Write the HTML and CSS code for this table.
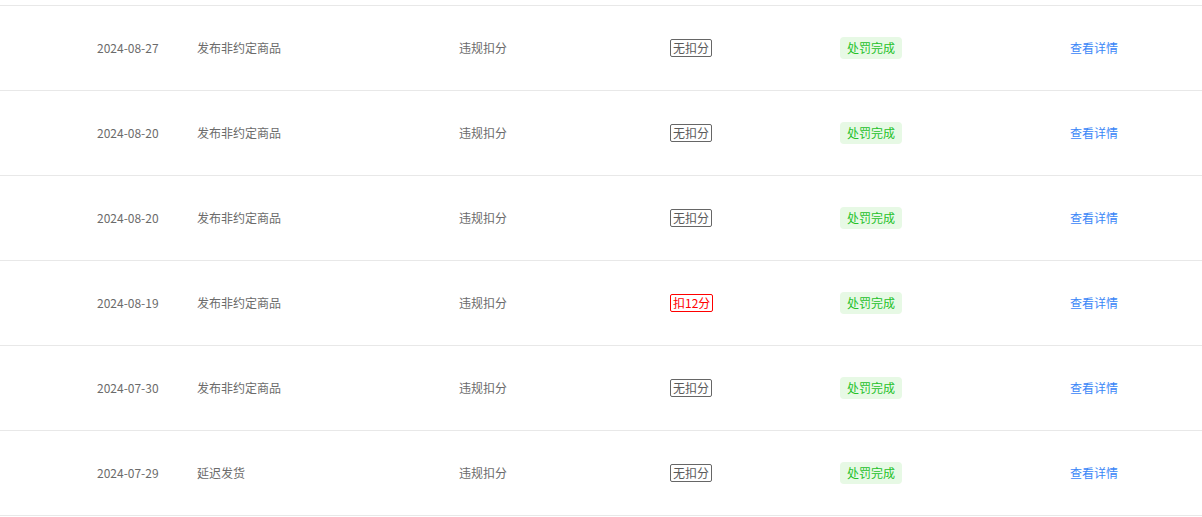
FILE: index.html
```html
<!DOCTYPE html>
<html lang="zh-CN">
<head>
<meta charset="utf-8">
<link rel="stylesheet" href="styles.css">
</head>
<body>
<div class="table">
  <div class="row">
    <span class="date">2024-08-27</span><span class="name">发布非约定商品</span><span class="type">违规扣分</span>
    <span class="cell"><span class="tag">无扣分</span></span><span class="cell"><span class="badge">处罚完成</span></span><a class="link">查看详情</a>
  </div>
  <div class="row">
    <span class="date">2024-08-20</span><span class="name">发布非约定商品</span><span class="type">违规扣分</span>
    <span class="cell"><span class="tag">无扣分</span></span><span class="cell"><span class="badge">处罚完成</span></span><a class="link">查看详情</a>
  </div>
  <div class="row">
    <span class="date">2024-08-20</span><span class="name">发布非约定商品</span><span class="type">违规扣分</span>
    <span class="cell"><span class="tag">无扣分</span></span><span class="cell"><span class="badge">处罚完成</span></span><a class="link">查看详情</a>
  </div>
  <div class="row">
    <span class="date">2024-08-19</span><span class="name">发布非约定商品</span><span class="type">违规扣分</span>
    <span class="cell"><span class="tag tag-red">扣12分</span></span><span class="cell"><span class="badge">处罚完成</span></span><a class="link">查看详情</a>
  </div>
  <div class="row">
    <span class="date">2024-07-30</span><span class="name">发布非约定商品</span><span class="type">违规扣分</span>
    <span class="cell"><span class="tag">无扣分</span></span><span class="cell"><span class="badge">处罚完成</span></span><a class="link">查看详情</a>
  </div>
  <div class="row">
    <span class="date">2024-07-29</span><span class="name">延迟发货</span><span class="type">违规扣分</span>
    <span class="cell"><span class="tag">无扣分</span></span><span class="cell"><span class="badge">处罚完成</span></span><a class="link">查看详情</a>
  </div>
</div>
</body>
</html>
```

FILE: styles.css
```css
html, body {
  margin: 0;
  padding: 0;
  background: #fff;
}
body {
  font-family: "Noto Sans CJK SC", "Noto Sans", sans-serif;
  font-size: 12px;
  color: #6b6b6b;
}
.table {
  padding-top: 5px;
}
.row {
  display: grid;
  grid-template-columns: 100px 262px 211px 170px 230px 1fr;
  align-items: center;
  height: 84px;
  padding-left: 97px;
  border-top: 1px solid #e8e8e8;
  line-height: 16px;
}
.row:last-child {
  border-bottom: 1px solid #e8e8e8;
}
.cell {
  display: flex;
}
.tag {
  border: 1px solid #666;
  border-radius: 2px;
  padding: 0 2px;
  color: #5a5a5a;
  line-height: 16px;
}
.tag-red {
  border-color: #f00;
  color: #f00;
}
.badge {
  background: #e7f9e5;
  color: #25c12a;
  border-radius: 4px;
  padding: 3px 7px;
  line-height: 16px;
}
.link {
  color: #3a86f7;
  cursor: pointer;
}
```
